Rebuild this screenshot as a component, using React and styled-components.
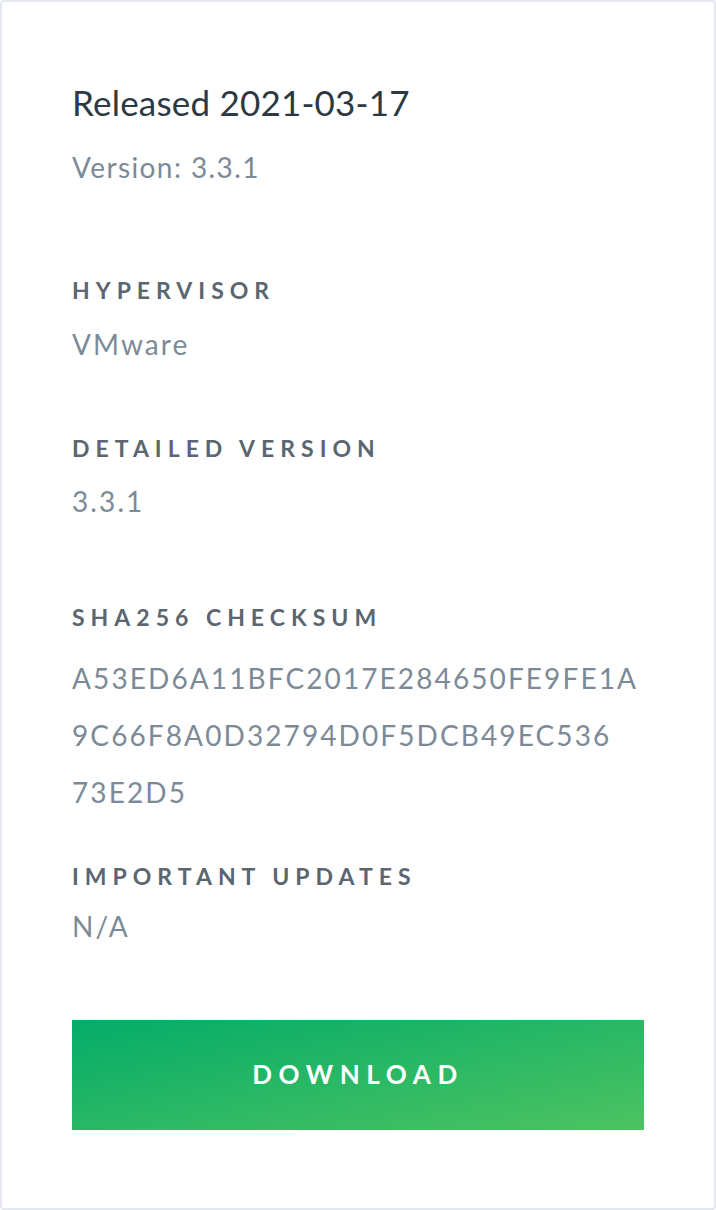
import styled, { createGlobalStyle } from 'styled-components';

const GlobalStyle = createGlobalStyle`
  html, body {
    margin: 0;
    padding: 0;
    background: #ffffff;
  }
  * {
    box-sizing: border-box;
  }
`;

// the checksum is shown in the same three rows as the original page
const release = {
  date: '2021-03-17',
  version: '3.3.1',
  details: [
    { id: 'hypervisor', label: 'Hypervisor', lines: ['VMware'], top: 88, gap: 11 },
    { id: 'detailed', label: 'Detailed Version', lines: ['3.3.1'], top: 60, gap: 10 },
    {
      id: 'checksum',
      label: 'SHA256 Checksum',
      lines: ['A53ED6A11BFC2017E284650FE9FE1A', '9C66F8A0D32794D0F5DCB49EC536', '73E2D5'],
      top: 72,
      gap: 18,
    },
    { id: 'updates', label: 'Important Updates', lines: ['N/A'], top: 40, gap: 7 },
  ],
};

export default function App() {
  return (
    <>
      <GlobalStyle />
      <Card>
        <Title>Released {release.date}</Title>
        <Version>Version: {release.version}</Version>

        {release.details.map(({ id, label, lines, top, gap }) => (
          <Section key={id} $top={top}>
            <Label>{label}</Label>
            <Value $gap={gap}>
              {lines.map((line) => (
                <ValueLine key={line}>{line}</ValueLine>
              ))}
            </Value>
          </Section>
        ))}

        <DownloadButton type="button">Download</DownloadButton>
      </Card>
    </>
  );
}

const Card = styled.div`
  width: 716px;
  height: 1210px;
  padding: 78px 70px 0;
  border: 2px solid #e3e7f0;
  border-radius: 4px;
  background: #ffffff;
  font-family: Lato, 'Liberation Sans', sans-serif;
`;

const Title = styled.h1`
  margin: 0;
  font-size: 35px;
  line-height: 44px;
  font-weight: 400;
  letter-spacing: 0.2px;
  color: #2c3943;
`;

const Version = styled.p`
  margin: 23px 0 0;
  font-size: 28px;
  line-height: 40px;
  letter-spacing: 1.4px;
  color: #7c8a97;
`;

const Section = styled.section`
  margin-top: ${({ $top }) => $top}px;
`;

const Label = styled.h3`
  margin: 0;
  font-size: 23px;
  line-height: 30px;
  font-weight: 700;
  letter-spacing: 6px;
  text-transform: uppercase;
  color: #5b6670;
`;

const Value = styled.p`
  margin: ${({ $gap }) => $gap}px 0 0;
  font-size: 28px;
  line-height: 57px;
  letter-spacing: 2.1px;
  color: #7c8a97;
`;

const ValueLine = styled.span`
  display: block;
  white-space: nowrap;
`;

const DownloadButton = styled.button`
  display: flex;
  align-items: center;
  justify-content: center;
  width: 100%;
  height: 110px;
  margin-top: 65px;
  padding: 0 0 2px;
  border: none;
  border-radius: 0;
  background: linear-gradient(to bottom right, #04ac69, #4dc361);
  font-family: Lato, 'Liberation Sans', sans-serif;
  font-size: 26px;
  font-weight: 700;
  letter-spacing: 6.6px;
  text-transform: uppercase;
  color: #ffffff;
  cursor: pointer;
`;
